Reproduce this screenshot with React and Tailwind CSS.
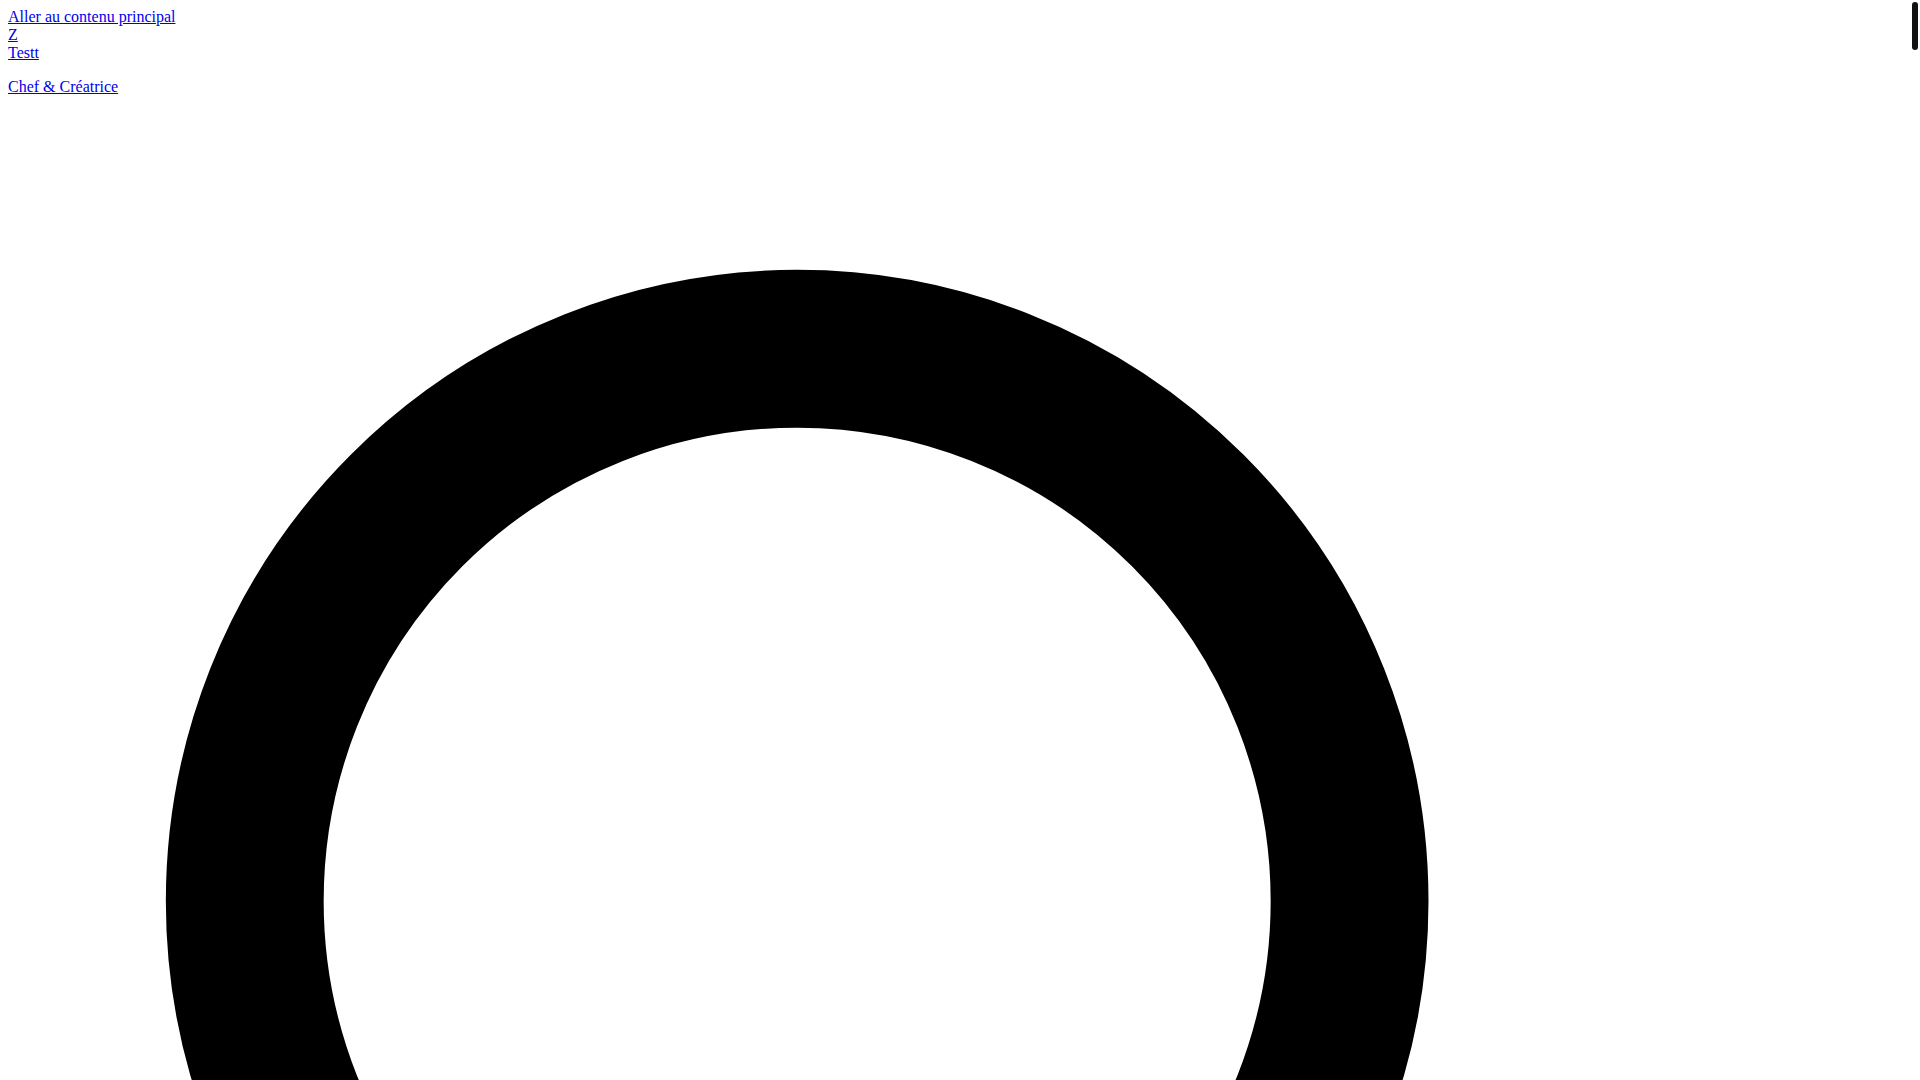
import React from "react";

export default function App() {
  const link = "text-[#0000ee] underline";
  return (
    <div className="m-2 min-h-[24200px] bg-white text-black font-['Liberation_Serif','Times_New_Roman',serif] text-[16px] leading-[normal]">
      <div>
        <a href="#main" className={link}>Aller au contenu principal</a>
      </div>
      <div>
        <a href="#" className={link}>Z</a>
      </div>
      <div>
        <a href="#" className={link}>Testt</a>
      </div>
      <p className="my-4">
        <a href="#" className={link}>Chef &amp; Créatrice</a>
      </p>
      <svg
        viewBox="0 0 24 24"
        fill="none"
        stroke="currentColor"
        strokeWidth="2"
        strokeLinecap="round"
        strokeLinejoin="round"
        className="block w-[1894px] h-[1894px]"
      >
        <circle cx="10" cy="10" r="7" />
        <path d="m21 21-6-6" />
      </svg>
      <div className="fixed right-[2px] top-[2px] w-[6px] h-[48px] rounded-full bg-[#111111]" />
    </div>
  );
}
